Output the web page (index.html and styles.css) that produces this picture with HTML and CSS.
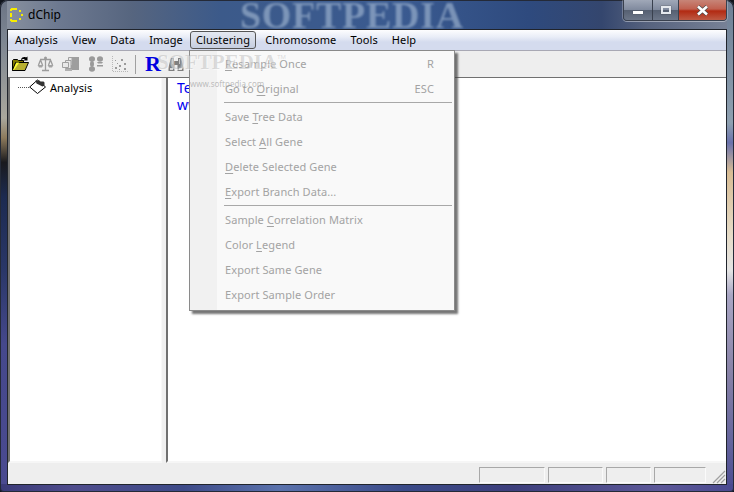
FILE: index.html
```html
<!DOCTYPE html>
<html lang="en">
<head>
<meta charset="utf-8">
<title>dChip</title>
<link rel="stylesheet" href="styles.css">
</head>
<body>
<div class="window">
  <div class="titlebar">
    <svg class="app-icon" width="13" height="14" viewBox="0 0 13 14"><path d="M1 0h6v2H1zM0 1h2v2H0zM0 5h2v4H0zM0 11h2v2H0zM1 12h6v2H1zM9 2h2v2H9zM11 6h2v2h-2zM9 10h2v2H9z" fill="#f7ec00"/></svg>
    <span class="title">dChip</span>
    <span class="glass-mark">SOFTPEDIA</span>
    <div class="caption">
      <div class="cap cap-min"><i class="min-glyph"></i></div>
      <div class="cap cap-max"><i class="max-glyph"></i></div>
      <div class="cap cap-close"><svg width="13" height="11" viewBox="0 0 13 11"><path d="M2 1.500 11 9.500M11 1.500 2 9.500" fill="none" stroke="#4a4a4a" stroke-width="4"/><path d="M2 1.500 11 9.500M11 1.500 2 9.500" fill="none" stroke="#fff" stroke-width="2.600"/></svg></div>
    </div>
  </div>
  <div class="client">
    <nav class="menubar">
      <span class="menu-item">Analysis</span>
      <span class="menu-item">View</span>
      <span class="menu-item">Data</span>
      <span class="menu-item">Image</span>
      <span class="menu-item active">Clustering</span>
      <span class="menu-item">Chromosome</span>
      <span class="menu-item">Tools</span>
      <span class="menu-item">Help</span>
    </nav>
    <div class="toolbar">
      <svg class="tool" width="17" height="16" viewBox="0 0 17 16"><path d="M.5 14.500V4.500l1-1h4l1 1h5v2h-8z" fill="#807800" stroke="#000"/><path d="M.5 14.500l3.500-8h12.500l-3.500 8z" fill="#b8b030" stroke="#000"/><path d="M1 14l3.300-7.500h3L2 14z" fill="#ffff30"/><path d="M9 3.500C10 1 12.500.5 14 1.500l1.500-1v4h-4l1.300-1.300c-1.200-.6-2.600-.3-3.300.8z" fill="#000"/></svg>
      <svg class="tool" width="17" height="16" viewBox="0 0 17 16"><path d="M8.500 2v12M5 14.500h7M3 3.500h11M3.500 4 1.500 9M3.500 4l2 5M13.500 4l-2 5M13.500 4l2 5" fill="none" stroke="#9c9c9c" stroke-width="1.300"/><path d="M.5 9h6L5 11.500H2zM10.500 9h6L15 11.500h-3z" fill="#a4a4a4"/><circle cx="8.500" cy="2" r="1.500" fill="#9c9c9c"/></svg>
      <svg class="tool" width="17" height="16" viewBox="0 0 17 16"><path d="M9 1h8v13H9z" fill="#9e9e9e"/><path d="M6.500 1.500H10v8H6.500z" fill="#e8e8e8" stroke="#a0a0a0"/><path d="M3.500 4.500H9v8H3.500z" fill="#e8e8e8" stroke="#a0a0a0"/><path d="M.5 6.500h6v5h-6z" fill="#e8e8e8" stroke="#a0a0a0"/><path d="M3 13h7v2H3z" fill="#b0b0b0"/></svg>
      <svg class="tool" width="17" height="16" viewBox="0 0 17 16"><g fill="#9a9a9a"><ellipse cx="5" cy="3" rx="3" ry="2.800"/><ellipse cx="5" cy="8" rx="2" ry="3"/><ellipse cx="5" cy="13" rx="3" ry="2.800"/><ellipse cx="13" cy="3" rx="3" ry="2.800"/><path d="M10 6h6l-1 1.500h-4zM10 9h6v1.500h-6z"/></g></svg>
      <svg class="tool" width="17" height="16" viewBox="0 0 17 16"><path d="M.5 0v15.500H17" fill="none" stroke="#b8b8b8" stroke-dasharray="1 1"/><g fill="#9a9a9a"><path d="M3 11h2v2H3zM5 7h1v1H5zM7 9h2v2H7zM9 3h2v2H9zM12 7h2v2h-2zM3 4h1v1H3zM12 12h2v2h-2zM7 13h1v1H7z"/></g></svg>
      <i class="tool-sep"></i>
      <span class="tool-r">R</span>
      <svg class="tool-bino" width="16" height="15" viewBox="0 0 16 15"><path d="M3 1h3v3h4V1h3l2.500 9v4H9.500V8h-3v6H.5v-4z" fill="#808080"/><path d="M2 11h3v2H2zM11 11h3v2h-3z" fill="#d8d8d8"/><path d="M4 2h1v5H4zM11 2h1v5h-1z" fill="#c8c8c8"/></svg>
    </div>
    <div class="panes">
      <div class="tree">
        <div class="tree-row">
          <i class="tree-dots"></i>
          <svg class="tree-icon" width="18" height="15" viewBox="0 0 18 15"><path d="M.7 8 8.500 1l8 7-8 6.500z" fill="#fff" stroke="#000"/><path d="M6.500 1.500h4l1 1h3l1 1v3l-2 1-6-3z" fill="#333"/></svg>
          <span class="tree-label">Analysis</span>
        </div>
      </div>
      <div class="splitter"></div>
      <div class="view">
        <div class="view-line">Te</div>
        <div class="view-line">ww</div>
      </div>
    </div>
    <div class="statusbar">
      <div class="status-cell s1"></div>
      <div class="status-cell s2"></div>
      <div class="status-cell s3"></div>
      <div class="status-cell s4"></div>
      <svg class="grip" width="14" height="14" viewBox="0 0 14 14"><path d="M13 1 1 13M13 5 5 13M13 9l-4 4" fill="none" stroke="#a0a0a0" stroke-width="1.200"/></svg>
    </div>
    <div class="popup">
      <div class="popup-gutter"></div>
      <div class="popup-list">
        <div class="pi"><span><u>R</u>esample Once</span><span>R</span></div>
        <div class="pi"><span>Go to <u>O</u>riginal</span><span>ESC</span></div>
        <hr class="psep">
        <div class="pi"><span>Save <u>T</u>ree Data</span></div>
        <div class="pi"><span>Select <u>A</u>ll Gene</span></div>
        <div class="pi"><span><u>D</u>elete Selected Gene</span></div>
        <div class="pi"><span><u>E</u>xport Branch Data...</span></div>
        <hr class="psep">
        <div class="pi"><span>Sample <u>C</u>orrelation Matrix</span></div>
        <div class="pi"><span>Color <u>L</u>egend</span></div>
        <div class="pi"><span>Export Same Gene</span></div>
        <div class="pi"><span>Export Sample Order</span></div>
      </div>
    </div>
    <div class="mark-big">SOFTPEDIA<sup class="mark-tm">TM</sup></div>
    <div class="mark-small">www.softpedia.com</div>
  </div>
</div>
</body>
</html>
```
FILE: styles.css
```css
* { box-sizing: border-box; }
html, body { margin: 0; padding: 0; }
body { width: 734px; height: 492px; overflow: hidden; background: #10141c; font-family: "Noto Sans", "Open Sans", sans-serif; font-size: 11px; }
.window {
  width: 734px; height: 492px; display: flex; flex-direction: column; padding: 0 7px 7px 7px; overflow: hidden;
  border-radius: 8px 8px 4px 4px;
  box-shadow: inset 0 0 0 1px #242a38;
  background:
    linear-gradient(90deg, #3a3a78 0, #4e4c8c 10%, #3d4a88 25%, #5a72ac 38%, #3a4a88 55%, #3d3f7c 70%, #5c5898 90%, #4a4a90 100%) 0 100% / 100% 8px no-repeat,
    linear-gradient(180deg, #6b7484 0, #7c8592 8%, #a9a79d 24%, #8d7a5c 28%, #1a1a1e 33%, #1c2a50 40%, #2a3768 55%, #45488c 70%, #4a4a90 100%) 0 0 / 7px 100% no-repeat,
    linear-gradient(180deg, #6e7f95 0, #8ea0b0 25%, #6a72ac 29%, #d8bc94 35%, #e6dcc8 48%, #e4e4e4 55%, #a9a6c4 60%, #8a84a8 75%, #64649c 90%, #4a4a90 100%) 100% 0 / 7px 100% no-repeat,
    linear-gradient(90deg, #8b93a0 0, #6d7990 8%, #56657f 18%, #3c5a8a 30%, #3a5a90 55%, #2e4a7e 72%, #34466e 82%, #56627e 88%, #7a8498 100%);
}
.titlebar { height: 29px; flex: none; display: flex; align-items: center; position: relative; padding: 0 0 0 3px; }
.app-icon { flex: none; }
.title { margin-left: 5px; font-size: 12px; color: #000; }
.glass-mark { position: absolute; left: 233px; top: 0; font: bold 38px/30px "Liberation Serif", serif; letter-spacing: .7px; color: rgba(165,185,212,.62); white-space: nowrap; filter: blur(.9px); }
.caption { position: absolute; right: 0; top: 0; height: 21px; width: 104px; display: flex; border: 1px solid #39404e; border-top: 0; border-radius: 0 0 4px 4px; overflow: hidden; box-shadow: 0 1px 0 rgba(255,255,255,.4), 1px 0 0 rgba(255,255,255,.25), -1px 0 0 rgba(255,255,255,.25); }
.cap { display: flex; align-items: center; justify-content: center; }
.cap-min { width: 29px; background: linear-gradient(180deg, #a0a8b8 0, #808a9e 48%, #566072 52%, #6c7688 100%); border-right: 1px solid #39404e; }
.cap-max { width: 26px; background: linear-gradient(180deg, #a0a8b8 0, #808a9e 48%, #566072 52%, #6c7688 100%); border-right: 1px solid #39404e; }
.cap-close { flex: 1; background: linear-gradient(180deg, #c78578 0, #c0604f 45%, #b22a12 55%, #bd5a44 100%); }
.min-glyph { width: 10px; height: 3px; background: #fff; margin-top: 5px; box-shadow: 0 0 1px #333; }
.max-glyph { width: 10px; height: 8px; border: 2px solid #e4e8ee; box-shadow: 0 0 1px #333; margin-top: -1px; }
.client { flex: 1; display: flex; flex-direction: column; position: relative; min-height: 0; background: #f0f0f0; border: 1px solid #20242c; }
.menubar { height: 21px; flex: none; display: flex; align-items: center; padding: 0 0 1px 2px; border-bottom: 1px solid #a8a8b4; background: linear-gradient(180deg, #fdfdfe 0, #e9edf7 35%, #d4dbee 60%, #d4dbee 95%); }
.menu-item { height: 18px; line-height: 17px; padding: 0 5px; margin-right: 4px; color: #000; white-space: nowrap; letter-spacing: .12px; }
.menu-item.active { border: 1px solid #555; border-radius: 3px; background: linear-gradient(180deg, #e4e8f0, #c6cee0); line-height: 15px; margin-left: -2px; }
.toolbar { height: 27px; flex: none; display: flex; align-items: center; padding: 0 0 0 4px; background: #eeeeee; border-bottom: 1px solid #707070; }
.tool { flex: none; margin-right: 8px; }
.tool-sep { width: 1px; height: 19px; background: #a0a0a0; margin: 0 9px 0 -2px; }
.tool-r { font: bold 22px/22px "Liberation Serif", serif; color: #0000e0; width: 23px; }
.tool-bino { flex: none; }
.panes { flex: 1; display: flex; min-height: 0; }
.tree { width: 154px; flex: none; background: #fff; border-left: 2px solid #707070; border-right: 1px solid #f8f8f8; border-bottom: 2px solid #f6f6f6; padding: 1px 0 0 8px; }
.tree-row { display: flex; align-items: center; height: 16px; }
.tree-dots { width: 11px; border-top: 1px dotted #555; flex: none; }
.tree-icon { flex: none; margin-top: -2px; }
.tree-label { margin-left: 3px; color: #000; letter-spacing: .05px; }
.splitter { width: 4px; flex: none; background: #f0f0f0; }
.view { flex: 1; background: #fff; border-left: 2px solid #707070; border-bottom: 2px solid #f6f6f6; padding: 1px 0 0 9px; color: #0000f0; font-size: 14px; line-height: 17px; }
.statusbar { height: 21px; flex: none; display: flex; align-items: flex-end; padding: 0 0 1px 471px; background: #eeeeee; position: relative; }
.status-cell { height: 16px; border-top: 1px solid #a8a8a8; border-left: 1px solid #a8a8a8; border-right: 1px solid #fafafa; border-bottom: 1px solid #fafafa; margin-right: 3px; }
.s1 { width: 66px; } .s2 { width: 55px; } .s3 { width: 45px; } .s4 { width: 52px; }
.grip { position: absolute; right: 0; bottom: 0; }
.popup { position: absolute; left: 181px; top: 20px; width: 266px; height: 261px; background: #f9f9f9; border: 1px solid #8a8a8a; display: flex; box-shadow: 3px 3px 2px rgba(60,60,60,.7); overflow: hidden; }
.popup-gutter { width: 27px; flex: none; background: #f1f1f1; }
.popup-list { flex: 1; padding: 0 2px 0 7px; }
.pi { height: 25px; display: flex; justify-content: space-between; align-items: center; color: #a3a3a3; padding: 0 18px 0 1px; white-space: nowrap; letter-spacing: .1px; }
.pi u { text-decoration-thickness: 1px; text-underline-offset: 2px; }
.psep { margin: 1px 0 1px; height: 1px; border: 0; background: #a8a8a8; }
.mark-big { position: absolute; left: 149px; top: 22px; font: bold 21px/20px "Liberation Serif", serif; color: rgba(175,175,175,.42); text-shadow: 1px 1px 0 rgba(255,255,255,.5); white-space: nowrap; }
.mark-tm { font: 6px/6px "Noto Sans", sans-serif; vertical-align: 10px; letter-spacing: 0; }
.mark-small { position: absolute; left: 182px; top: 49px; font-size: 8px; line-height: 10px; color: rgba(150,150,150,.6); white-space: nowrap; }
```
